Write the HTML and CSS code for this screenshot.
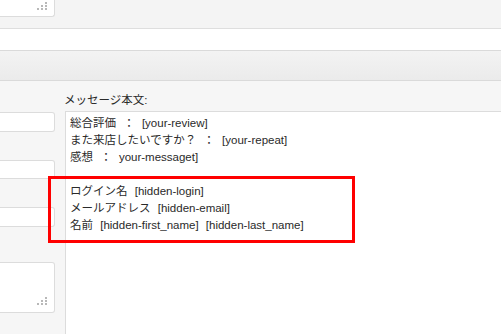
FILE: index.html
```html
<!DOCTYPE html>
<html lang="ja">
<head>
    <meta charset="utf-8" />
    <meta name="viewport" content="width=device-width, initial-scale=1.0" />
    <title>メール設定</title>
    <link rel="stylesheet" href="styles.css">
</head>
<body>

    <div class="top-strip">
        <div class="box box-top">
            <svg class="grip" width="10" height="8" viewBox="0 0 10 8">
                <rect x="8" y="0" width="2" height="2" />
                <rect x="4" y="3" width="2" height="2" />
                <rect x="8" y="3" width="2" height="2" />
                <rect x="0" y="6" width="2" height="2" />
                <rect x="4" y="6" width="2" height="2" />
                <rect x="8" y="6" width="2" height="2" />
            </svg>
        </div>
    </div>

    <div class="white-band"></div>
    <div class="tab-bar"></div>

    <div class="panel">
        <div class="col-left">
            <div class="box field field-first"></div>
            <div class="box field"></div>
            <div class="box field"></div>
            <div class="box field field-area">
                <svg class="grip" width="10" height="8" viewBox="0 0 10 8">
                    <rect x="8" y="0" width="2" height="2" />
                    <rect x="4" y="3" width="2" height="2" />
                    <rect x="8" y="3" width="2" height="2" />
                    <rect x="0" y="6" width="2" height="2" />
                    <rect x="4" y="6" width="2" height="2" />
                    <rect x="8" y="6" width="2" height="2" />
                </svg>
            </div>
        </div>

        <div class="col-right">
            <label class="msg-label">メッセージ本文:</label>
            <div class="msg-body">
                <div class="line">総合評価 ： [your-review]</div>
                <div class="line">また来店したいですか？ ： [your-repeat]</div>
                <div class="line">感想 ： your-messaget]</div>
                <div class="line">&nbsp;</div>
                <div class="line">ログイン名 [hidden-login]</div>
                <div class="line">メールアドレス [hidden-email]</div>
                <div class="line">名前 [hidden-first_name] [hidden-last_name]</div>
            </div>
        </div>

        <div class="highlight"></div>
    </div>

</body>
</html>
```

FILE: styles.css
```css
html, body {
    margin: 0;
    padding: 0;
    height: 100%;
    overflow: hidden;
}

body {
    font-family: "Liberation Sans", "Noto Sans CJK JP", sans-serif;
    font-size: 11.5px;
    color: #2a2a2a;
    background-color: #f5f5f5;
}

.box {
    background-color: #fff;
    border: 1px solid #dcdcdc;
    border-left: none;
    border-radius: 0 3px 3px 0;
    box-sizing: border-box;
    position: relative;
}

.grip {
    position: absolute;
    right: 6px;
    bottom: 5px;
    fill: #b8b8b8;
}

.top-strip {
    height: 28px;
    background-color: #f4f4f4;
    border-bottom: 1px solid #dedede;
}

.box-top {
    width: 55px;
    height: 17px;
    border-top: none;
    border-radius: 0 0 3px 0;
}

.box-top .grip {
    bottom: 6px;
    right: 7px;
}

.white-band {
    height: 21px;
    background-color: #fff;
    border-bottom: 1px solid #dadada;
}

.tab-bar {
    height: 29px;
    background: linear-gradient(#f3f3f3, #ebebeb);
    border-bottom: 1px solid #dadada;
}

.panel {
    position: relative;
    display: flex;
    height: 260px;
    background-color: #f6f6f6;
}

.col-left {
    width: 55px;
    display: flex;
    flex-direction: column;
    padding-top: 31px;
}

.field {
    height: 22px;
    margin-bottom: 28px;
}

.field-area {
    height: 58px;
    margin-top: 7px;
}

.field-area .grip {
    bottom: 7px;
    right: 7px;
}

.col-right {
    flex: 1;
    padding-left: 9px;
    padding-top: 11px;
    display: flex;
    flex-direction: column;
}

.msg-label {
    height: 19px;
    line-height: 17px;
}

.msg-body {
    flex: 1;
    margin-left: 1px;
    margin-right: -4px;
    background-color: #fff;
    border: 1px solid #dcdcdc;
    padding: 3px 4px;
}

.line {
    line-height: 17px;
    white-space: pre;
    word-spacing: 4px;
}

.highlight {
    position: absolute;
    left: 48px;
    top: 95px;
    width: 301px;
    height: 61px;
    border: 3px solid #ff0000;
}
```
